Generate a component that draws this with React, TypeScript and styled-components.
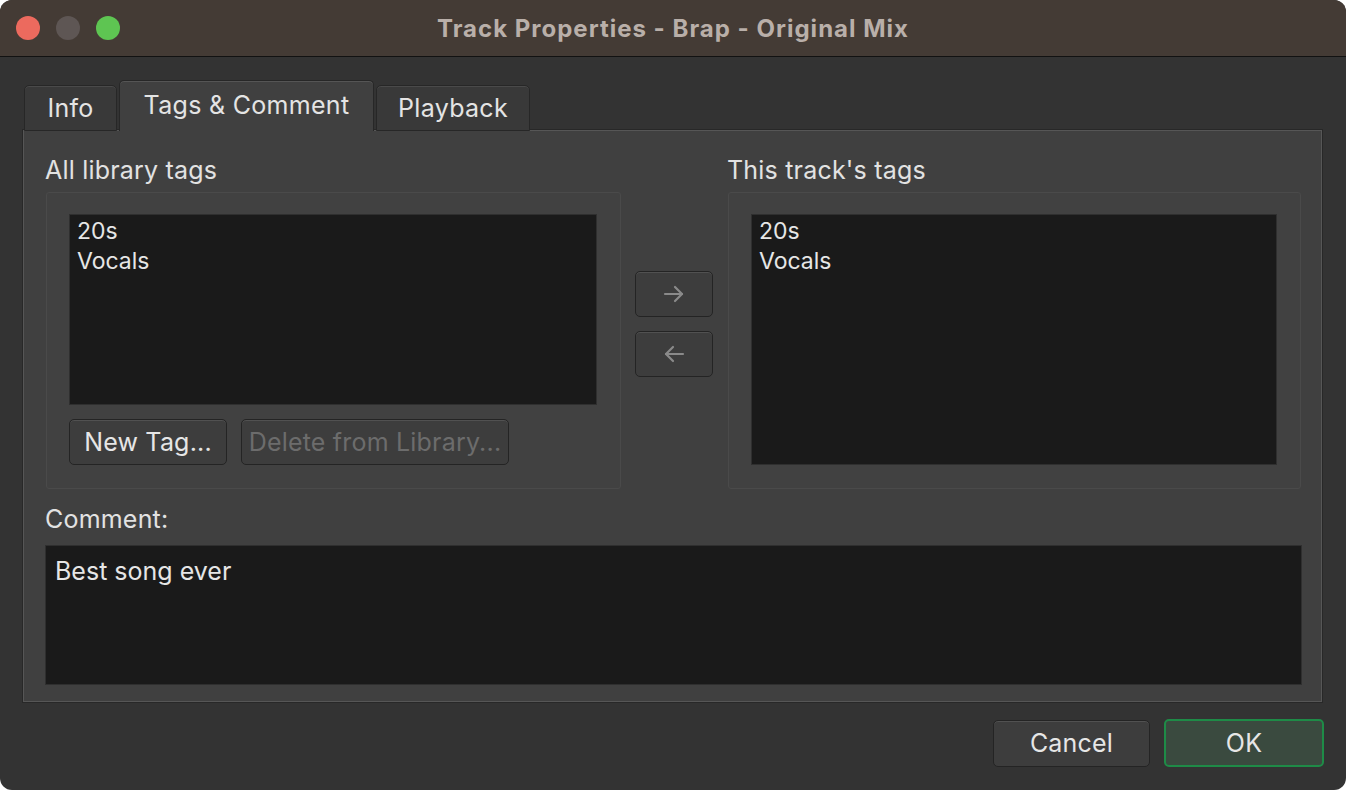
import React from "react";
import styled, { createGlobalStyle } from "styled-components";

const GlobalStyle = createGlobalStyle`
  html, body {
    margin: 0;
    padding: 0;
    background: #ffffff;
  }
  body {
    font-family: Inter, "Open Sans", "Liberation Sans", sans-serif;
    -webkit-font-smoothing: antialiased;
  }
`;

const Window = styled.div`
  width: 1346px;
  height: 790px;
  border-radius: 12px;
  overflow: hidden;
  background: #333333;
  display: flex;
  flex-direction: column;
`;

const TitleBar = styled.div`
  height: 56px;
  flex-shrink: 0;
  background: #443b35;
  border-bottom: 1px solid #121212;
  display: grid;
  grid-template-columns: 1fr auto 1fr;
  align-items: center;
  padding: 0 16px;
`;

const Lights = styled.div`
  display: flex;
  gap: 16px;
`;

const Light = styled.span<{ $color: string }>`
  width: 24px;
  height: 24px;
  border-radius: 50%;
  background: ${p => p.$color};
`;

const Title = styled.div`
  font-size: 24px;
  font-weight: 700;
  color: #b9afa9;
  letter-spacing: 1px;
`;

const Body = styled.div`
  flex: 1;
  display: flex;
  flex-direction: column;
  padding: 23px 24px 22px 23px;
`;

const TabRow = styled.div`
  display: flex;
  align-items: flex-end;
  gap: 2px;
  padding-left: 1px;
  position: relative;
  z-index: 1;
  margin-bottom: -1px;
`;

const Tab = styled.div<{ $active?: boolean; $width: number }>`
  width: ${p => p.$width}px;
  height: ${p => (p.$active ? 51 : 46)}px;
  box-sizing: border-box;
  display: flex;
  align-items: center;
  justify-content: center;
  padding-bottom: ${p => (p.$active ? 2 : 1)}px;
  font-size: 25px;
  letter-spacing: 0.3px;
  color: #e4e4e4;
  background: ${p => (p.$active ? "#404040" : "#393939")};
  border: 1px solid #272727;
  border-bottom: ${p => (p.$active ? "none" : "1px solid #272727")};
  border-radius: 5px 5px 0 0;
  box-shadow: inset 0 1px 0 ${p => (p.$active ? "#555555" : "#4a4a4a")};
`;

const Pane = styled.div`
  height: 572px;
  box-sizing: border-box;
  background: #404040;
  border: 1px solid #565656;
  box-shadow: 0 0 0 1px #282828;
  padding: 24px 20px 15px 21px;
  display: flex;
  flex-direction: column;
`;

const TagsRow = styled.div`
  display: grid;
  grid-template-columns: 576px 78px 1fr;
  column-gap: 14px;
`;

const Column = styled.div`
  display: flex;
  flex-direction: column;
`;

const Label = styled.div`
  font-size: 25px;
  letter-spacing: 0.2px;
  line-height: 30px;
  color: #e2e2e2;
  margin-bottom: 7px;
`;

const GroupBox = styled.div`
  height: 297px;
  box-sizing: border-box;
  margin-left: 1px;
  background: #414141;
  border: 1px solid #4a4a4a;
  border-radius: 3px;
  padding: 21px 23px 23px 22px;
  display: flex;
  flex-direction: column;
`;

const ListBox = styled.div<{ $grow?: boolean }>`
  height: ${p => (p.$grow ? "auto" : "191px")};
  flex: ${p => (p.$grow ? 1 : "none")};
  box-sizing: border-box;
  background: #1a1a1a;
  border: 1px solid #2f2f2f;
  padding: 1px 7px;
`;

const ListItem = styled.div`
  font-size: 23px;
  line-height: 30px;
  color: #e6e6e6;
`;

const ButtonRow = styled.div`
  display: flex;
  gap: 14px;
  margin-top: 14px;
`;

const Button = styled.button<{ $width: number; $disabled?: boolean }>`
  width: ${p => p.$width}px;
  height: 46px;
  box-sizing: border-box;
  font-family: inherit;
  font-size: 25px;
  letter-spacing: 0.2px;
  color: ${p => (p.$disabled ? "#6c6c6c" : "#e6e6e6")};
  background: #3d3d3d;
  border: 1px solid #242424;
  border-radius: 5px;
  box-shadow: inset 0 1px 0 #515151;
  padding: 0;
  display: flex;
  align-items: center;
  justify-content: center;
`;

const ArrowColumn = styled.div`
  display: flex;
  flex-direction: column;
  justify-content: center;
  gap: 14px;
  padding-top: 4px;
`;

const ArrowButton = styled(Button)`
  color: #8a8a8a;
`;

const CommentLabel = styled(Label)`
  margin-top: 15px;
  margin-bottom: 11px;
`;

const CommentBox = styled.div`
  height: 140px;
  box-sizing: border-box;
  margin-right: -1px;
  background: #1a1a1a;
  border: 1px solid #2f2f2f;
  padding: 10px 9px;
  font-size: 25px;
  line-height: 30px;
  color: #e6e6e6;
`;

const Footer = styled.div`
  display: flex;
  justify-content: flex-end;
  align-items: center;
  gap: 14px;
  margin-top: 17px;
  margin-right: -2px;
`;

const CancelButton = styled(Button)`
  height: 47px;
`;

const OkButton = styled(Button)`
  height: 48px;
  background: #3a4a3f;
  border: 2px solid #1e8b47;
  box-shadow: none;
`;

function Arrow({ dir }: { dir: "right" | "left" }) {
  return (
    <svg width="22" height="18" viewBox="0 0 22 18" fill="none" stroke="currentColor" strokeWidth="2.2" strokeLinecap="round" strokeLinejoin="round">
      {dir === "right" ? (
        <>
          <path d="M2 9h17" />
          <path d="M12 2l7 7-7 7" />
        </>
      ) : (
        <>
          <path d="M20 9H3" />
          <path d="M10 2L3 9l7 7" />
        </>
      )}
    </svg>
  );
}

export default function App() {
  return (
    <>
      <GlobalStyle />
      <Window>
        <TitleBar>
          <Lights>
            <Light $color="#ec6a5e" />
            <Light $color="#5e5654" />
            <Light $color="#5ec552" />
          </Lights>
          <Title>Track Properties - Brap - Original Mix</Title>
          <div />
        </TitleBar>
        <Body>
          <TabRow>
            <Tab $width={93}>Info</Tab>
            <Tab $width={255} $active>Tags &amp; Comment</Tab>
            <Tab $width={154}>Playback</Tab>
          </TabRow>
          <Pane>
            <TagsRow>
              <Column>
                <Label>All library tags</Label>
                <GroupBox>
                  <ListBox>
                    <ListItem>20s</ListItem>
                    <ListItem>Vocals</ListItem>
                  </ListBox>
                  <ButtonRow>
                    <Button $width={158}>New Tag...</Button>
                    <Button $width={268} $disabled>Delete from Library...</Button>
                  </ButtonRow>
                </GroupBox>
              </Column>
              <ArrowColumn>
                <ArrowButton $width={78}><Arrow dir="right" /></ArrowButton>
                <ArrowButton $width={78}><Arrow dir="left" /></ArrowButton>
              </ArrowColumn>
              <Column>
                <Label>This track's tags</Label>
                <GroupBox>
                  <ListBox $grow>
                    <ListItem>20s</ListItem>
                    <ListItem>Vocals</ListItem>
                  </ListBox>
                </GroupBox>
              </Column>
            </TagsRow>
            <CommentLabel>Comment:</CommentLabel>
            <CommentBox>Best song ever</CommentBox>
          </Pane>
          <Footer>
            <CancelButton $width={157}>Cancel</CancelButton>
            <OkButton $width={160}>OK</OkButton>
          </Footer>
        </Body>
      </Window>
    </>
  );
}
